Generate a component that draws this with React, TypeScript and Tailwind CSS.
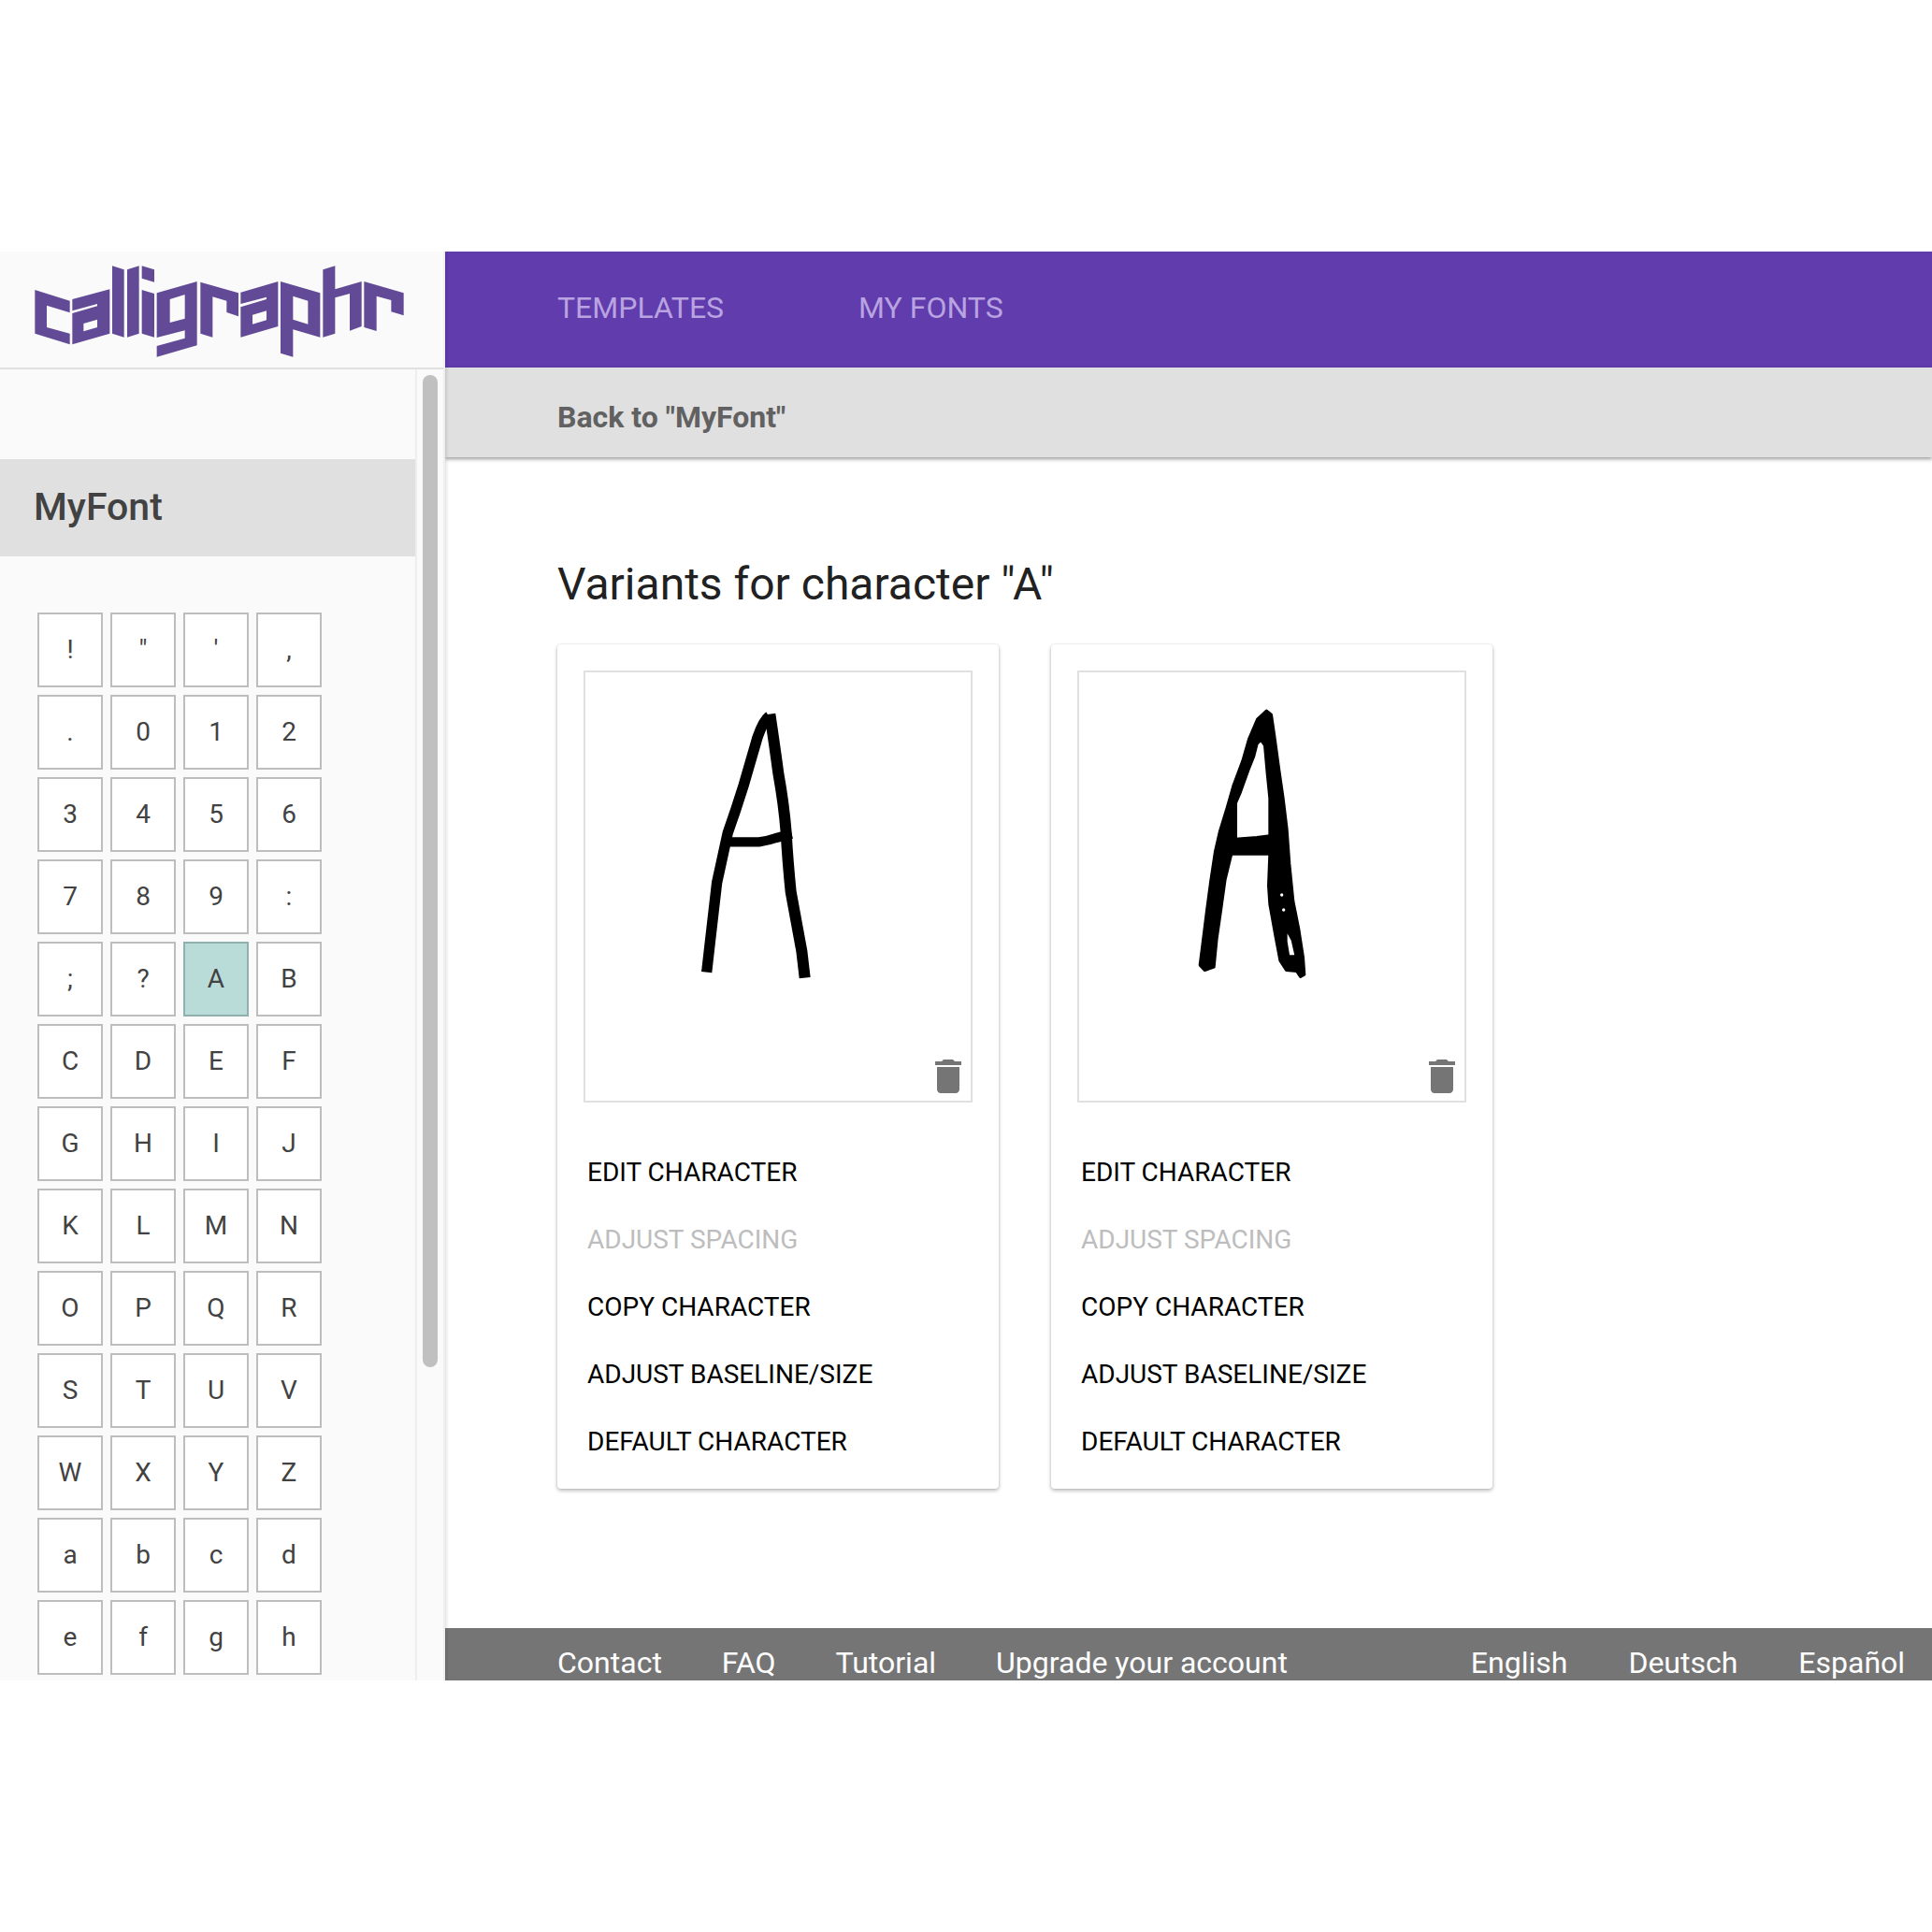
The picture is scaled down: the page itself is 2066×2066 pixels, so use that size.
const chars = [
  "!", '"', "'", ",",
  ".", "0", "1", "2",
  "3", "4", "5", "6",
  "7", "8", "9", ":",
  ";", "?", "A", "B",
  "C", "D", "E", "F",
  "G", "H", "I", "J",
  "K", "L", "M", "N",
  "O", "P", "Q", "R",
  "S", "T", "U", "V",
  "W", "X", "Y", "Z",
  "a", "b", "c", "d",
  "e", "f", "g", "h",
];

const actions = [
  { label: "EDIT CHARACTER" },
  { label: "ADJUST SPACING", disabled: true },
  { label: "COPY CHARACTER" },
  { label: "ADJUST BASELINE/SIZE" },
  { label: "DEFAULT CHARACTER" },
];

function Logo() {
  return (
    <svg viewBox="0 0 1230 330" className="ml-[30px] mt-[6px] block h-[110px] w-[410px]" fill="#624a97" fillRule="evenodd">
      <path d="M22 105L134 140V178L60 155V225L134 245V280L22 245Z" />
      <path d="M142 135L262 103V245L142 280V180L222 157V150L142 172ZM178 213L222 200V225L178 238Z" />
      <path d="M270 28L308 40V257L270 245Z" />
      <path d="M318 40L356 28V245L318 257Z" />
      <path d="M365 28L405 40V80L365 68Z" />
      <path d="M365 105L405 117V257L365 245Z" />
      <path d="M413 115L542 78V283L413 320V285L503 260V235L413 258ZM455 135L503 120V197L455 210Z" />
      <path d="M553 80L675 115V190L637 177V140L592 127V257L553 245Z" />
      <path d="M682 113L802 78V222L682 257V160L765 135V128L682 150ZM720 185L765 172V202L720 215Z" />
      <path d="M810 78L937 115V257L850 232V320L810 308ZM850 125L898 140V215L850 200Z" />
      <path d="M946 40L985 28V103L1070 78V222L1032 236V117L985 130V245L946 257Z" />
      <path d="M1078 78L1205 115V187L1165 175V138L1118 125V237L1078 225Z" />
    </svg>
  );
}

function GlyphThin() {
  return (
    <svg viewBox="108 116 1236 1374" className="block h-full w-full" fill="none" stroke="#000" strokeLinejoin="round">
      <path strokeWidth="34" d="M697 258Q680 268 660 325Q640 395 615 480Q590 560 565 630Q550 700 530 790Q517 900 507 990L497 1078" />
      <path strokeWidth="36" d="M700 250Q715 350 727 440Q745 540 752 630Q757 720 767 820Q787 930 802 1010L812 1096" />
      <path strokeWidth="31" d="M560 660L665 660Q695 656 720 647L770 634" />
    </svg>
  );
}

function GlyphThick() {
  return (
    <svg viewBox="102 116 1236 1374" className="block h-full w-full" fill="#000" fillRule="evenodd" stroke="#000" strokeWidth="10" strokeLinejoin="round">
      <path d="M703 240L718 252L728 320L743 430L756 520L768 620L776 730L788 850L806 940L820 1030L824 1085L812 1092L800 1074L767 1071L747 1040L732 960L714 860L710 800L714 698L590 698L570 780L556 880L543 970L534 1061L505 1071L490 1055L497 1000L512 880L524 790L539 690L554 625L577 550L597 480L627 400L647 330L674 267ZM685 332L698 350L706 440L714 520L714 641L672 646L604 651L604 535L619 500L644 430L662 385L672 345ZM765 934L787 975L799 1028L773 1028L765 980Z" />
      <circle cx="752" cy="830" r="5" fill="#fff" stroke="none" />
      <circle cx="758" cy="878" r="5" fill="#fff" stroke="none" />
    </svg>
  );
}

function VariantCard({ glyph }: { glyph: React.ReactNode }) {
  return (
    <div className="h-[903px] w-[472px] rounded-[4px] bg-white p-[28px] pb-[15px] shadow-[0_2px_4px_rgba(0,0,0,0.28),0_0_2px_rgba(0,0,0,0.12)]">
      <div className="relative h-[462px] w-[416px] border-2 border-[#e0e0e0]">
        {glyph}
        <svg viewBox="0 0 24 24" className="absolute bottom-[2px] right-0 h-[48px] w-[48px]" fill="#757575">
          <path d="M6 19c0 1.1.9 2 2 2h8c1.1 0 2-.9 2-2V7H6v12zM19 4h-3.5l-1-1h-5l-1 1H5v2h14V4z" />
        </svg>
      </div>
      <div className="mt-[39px] flex flex-col">
        {actions.map((action) => (
          <div
            key={action.label}
            className={`flex h-[72px] items-center pl-[4px] text-[28px] ${action.disabled ? "text-[#bdbdbd]" : "text-black"}`}
          >
            {action.label}
          </div>
        ))}
      </div>
    </div>
  );
}

export default function App() {
  return (
    <div className="h-[2066px] bg-white pt-[269px] font-[Roboto,sans-serif]">
      <div className="flex h-[1528px] overflow-hidden">
        <aside className="relative z-10 flex w-[476px] shrink-0 flex-col border-r-2 border-[#eeeeee] bg-[#fafafa] shadow-[1px_0_4px_rgba(0,0,0,0.15)]">
          <div className="h-[126px] shrink-0 border-b-2 border-[#e0e0e0]">
            <Logo />
          </div>
          <div className="flex min-h-0 flex-1">
            <div className="w-[446px] shrink-0 border-r-2 border-[#eeeeee]">
              <div className="mt-[96px] flex h-[104px] items-center bg-[#e0e0e0] pl-[36px] text-[41px] font-medium text-[#424242]">
                MyFont
              </div>
              <div className="ml-[40px] mt-[60px] grid grid-cols-[repeat(4,70px)] auto-rows-[80px] gap-x-[8px] gap-y-[8px]">
                {chars.map((c) => (
                  <div
                    key={c}
                    className={`flex items-center justify-center border-2 text-[28px] text-[#424242] ${c === "A" ? "border-[#8fb0ad] bg-[#b9dcd9]" : "border-[#bdbdbd] bg-white"}`}
                  >
                    {c}
                  </div>
                ))}
              </div>
            </div>
            <div className="ml-[6px] mt-[6px] h-[1061px] w-[16px] rounded-full bg-[#c0c0c0]" />
          </div>
        </aside>

        <div className="flex min-w-0 flex-1 flex-col">
          <nav className="flex h-[124px] shrink-0 items-center gap-[144px] bg-[#603cad] pb-[5px] pl-[120px] text-[32px] text-[#b9a3e0]">
            <span>TEMPLATES</span>
            <span>MY FONTS</span>
          </nav>
          <div className="relative flex h-[96px] shrink-0 items-center bg-[#e0e0e0] pl-[120px] pt-[10px] text-[32px] font-bold text-[#616161] shadow-[0_2px_4px_rgba(0,0,0,0.4)]">
            Back to "MyFont"
          </div>
          <main className="min-h-0 flex-1 bg-white pl-[120px] pt-[108px]">
            <h1 className="h-[92px] text-[48px] leading-[56px] text-[#212121]">Variants for character "A"</h1>
            <div className="flex gap-[56px]">
              <VariantCard glyph={<GlyphThin />} />
              <VariantCard glyph={<GlyphThick />} />
            </div>
          </main>
          <footer className="flex h-[56px] shrink-0 overflow-hidden bg-[#757575] pl-[120px] pt-[17px] text-[32px] leading-[40px] text-white">
            <div className="flex gap-[64px]">
              <span>Contact</span>
              <span>FAQ</span>
              <span>Tutorial</span>
              <span>Upgrade your account</span>
            </div>
            <div className="ml-[196px] flex gap-[65px]">
              <span>English</span>
              <span>Deutsch</span>
              <span>Español</span>
            </div>
          </footer>
        </div>
      </div>
    </div>
  );
}
